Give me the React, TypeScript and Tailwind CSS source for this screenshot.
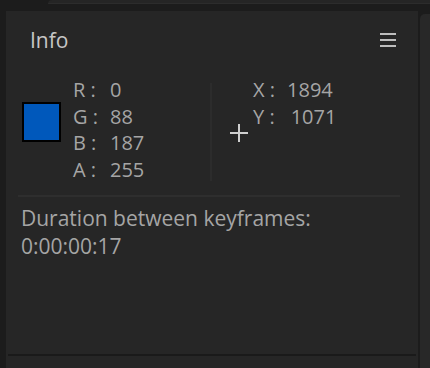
import React from 'react';

const channels = [
  { label: 'R', value: '0' },
  { label: 'G', value: '88' },
  { label: 'B', value: '187' },
  { label: 'A', value: '255' },
];

const coords = [
  { label: 'X', value: '1894', pad: 'pl-[12px]' },
  { label: 'Y', value: '1071', pad: 'pl-[16px]' },
];

const MenuIcon = () => (
  <svg width="16" height="14" viewBox="0 0 16 14" className="text-[#bdbdbd]">
    <rect x="0" y="0" width="16" height="2" fill="currentColor" />
    <rect x="0" y="6" width="16" height="2" fill="currentColor" />
    <rect x="0" y="12" width="16" height="2" fill="currentColor" />
  </svg>
);

const Crosshair = () => (
  <svg width="18" height="18" viewBox="0 0 18 18" className="text-[#cfcfcf]">
    <rect x="8" y="0" width="2" height="18" fill="currentColor" />
    <rect x="0" y="8" width="18" height="2" fill="currentColor" />
  </svg>
);

export default function App() {
  return (
    <div
      className="w-[430px] h-[368px] bg-[#1c1c1c] overflow-hidden flex flex-col"
      style={{ fontFamily: '"Open Sans", Lato, sans-serif' }}
    >
      {/* strip of the panel above */}
      <div className="h-[11px] flex shrink-0">
        <div className="w-[48px]" />
        <div className="flex-1 h-[4px] bg-[#252525] border-b border-[#2c2c2c] rounded-tl-[4px]" />
      </div>

      <div className="flex flex-1 min-h-0">
        <div className="w-[6px] shrink-0" />

        {/* Info panel */}
        <div className="w-[412px] shrink-0 bg-[#262626] flex flex-col">
          <div className="flex items-center justify-between pl-[24px] pr-[22px] pt-[15px]">
            <span className="text-[21px] leading-[28px] text-[#c6c6c6]">Info</span>
            <MenuIcon />
          </div>

          <div className="flex mt-[23px] h-[110px]">
            {/* colour swatch */}
            <div className="pl-[16px] pt-[25px] w-[67px] shrink-0">
              <div className="w-[39px] h-[40px] border-2 border-black bg-[#0058bb]" />
            </div>

            <div className="w-[137px] shrink-0 text-[20px] leading-[26.5px] text-[#a5a5a5]">
              {channels.map((c) => (
                <div key={c.label} className="grid grid-cols-[37px_auto]">
                  <span>{c.label} :</span>
                  <span>{c.value}</span>
                </div>
              ))}
            </div>

            <div className="w-[2px] bg-[#2c2c2c] my-[6px] shrink-0" />

            <div className="flex pl-[18px] pt-[47px] items-start">
              <Crosshair />
            </div>

            <div className="pl-[5px] text-[20px] leading-[26.5px] text-[#a5a5a5]">
              {coords.map((c) => (
                <div key={c.label} className="flex">
                  <span>{c.label} :</span>
                  <span className={c.pad}>{c.value}</span>
                </div>
              ))}
            </div>
          </div>

          <div className="mx-[12px] mt-[8px] h-[2px] w-[382px] bg-[#2e2e2e]" />

          <div className="pl-[15px] pt-[7px] text-[21px] leading-[28px] text-[#a5a5a5]">
            <div>Duration between keyframes:</div>
            <div>0:00:00:17</div>
          </div>

          <div className="flex-1" />
          <div className="mx-[2px] h-[2px] bg-[#1a1a1a] w-[408px]" />
          <div className="h-[12px]" />
        </div>

        <div className="w-[2px] shrink-0" />

        {/* neighbouring panel */}
        <div className="flex-1 mt-[3px] bg-[#282828] rounded-tl-[5px]" />
      </div>
    </div>
  );
}
